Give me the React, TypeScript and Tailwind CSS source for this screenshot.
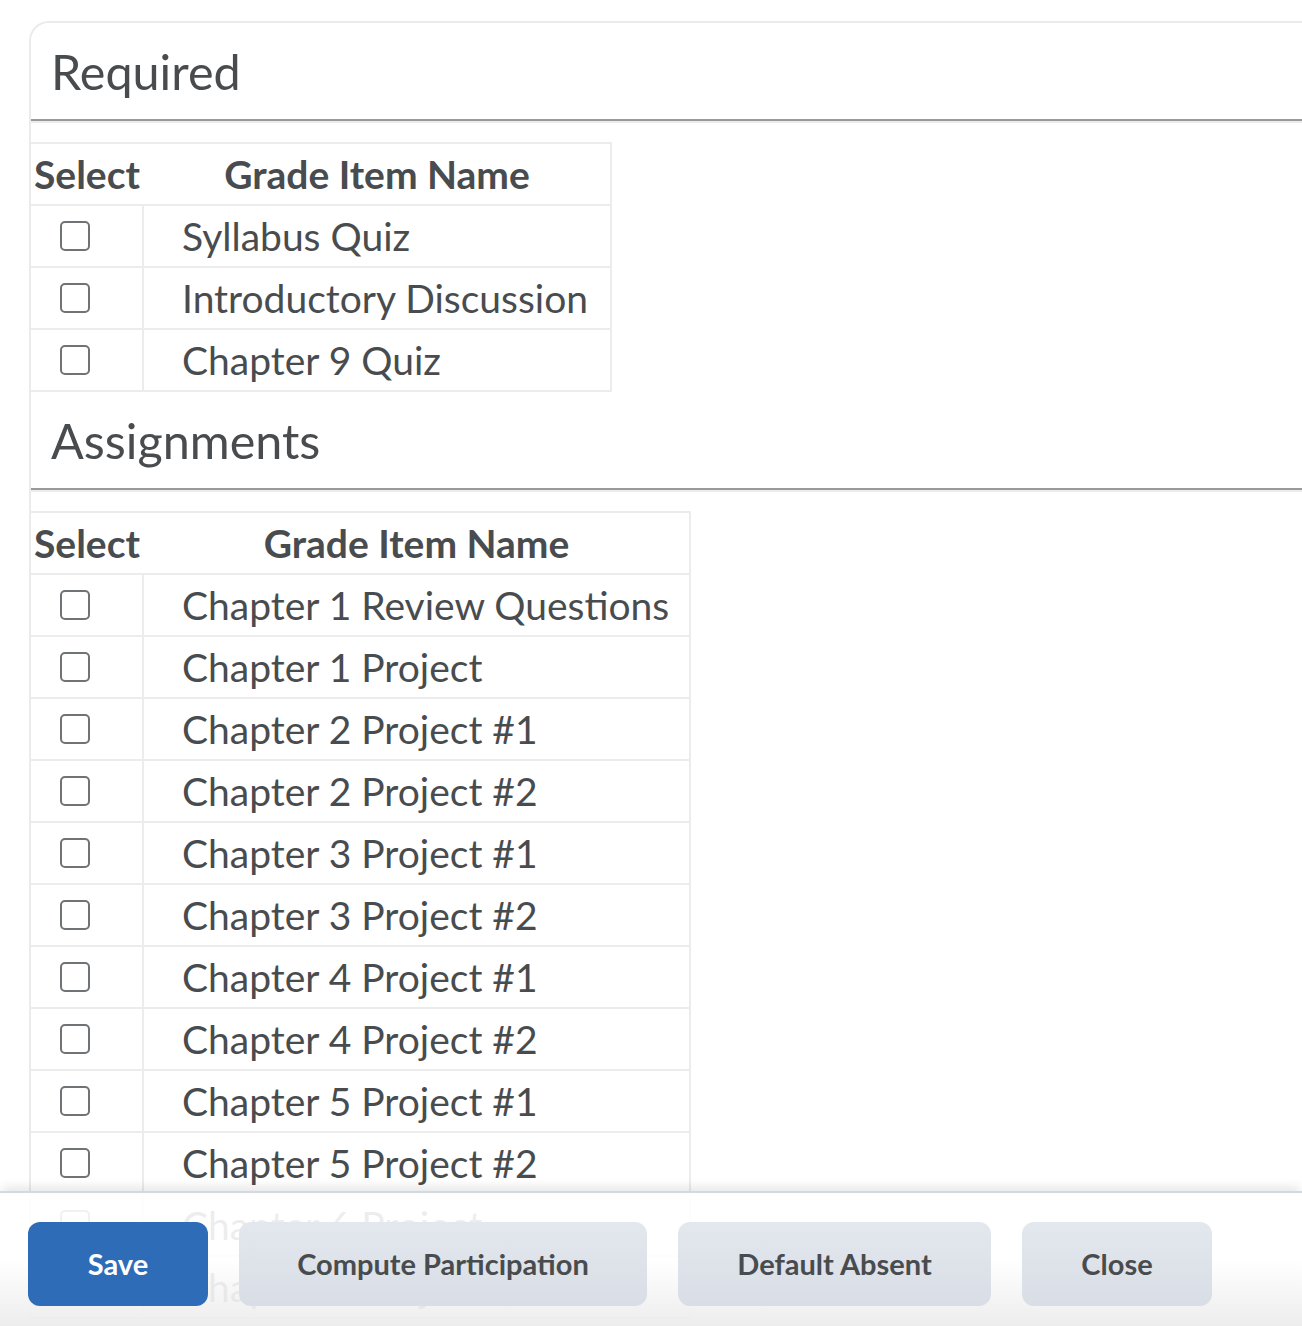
const required = ['Syllabus Quiz', 'Introductory Discussion', 'Chapter 9 Quiz']

const assignments = [
  'Chapter 1 Review Questions',
  'Chapter 1 Project',
  'Chapter 2 Project #1',
  'Chapter 2 Project #2',
  'Chapter 3 Project #1',
  'Chapter 3 Project #2',
  'Chapter 4 Project #1',
  'Chapter 4 Project #2',
  'Chapter 5 Project #1',
  'Chapter 5 Project #2',
  'Chapter 6 Project',
  'Chapter 7 Project',
]

const Checkbox = () => (
  <span className="block h-[30px] w-[30px] rounded-[5px] border-2 border-[#6f7376] bg-white" />
)

const SectionHeader = ({ title }: { title: string }) => (
  <>
    <div className="flex h-[98px] items-center border-b-2 border-[#999999] pl-[20px] text-[48.5px] leading-none text-[#494c4e]">
      {title}
    </div>
    <div className="h-[2px] bg-[#ececec]" />
  </>
)

const GradeTable = ({ items, width }: { items: string[]; width: string }) => (
  <div className={`mt-[19px] border-t-2 border-r-2 border-[#ececec] ${width}`}>
    <div className="flex h-[62px] items-center border-b-2 border-[#ececec] text-[39px] font-bold">
      <div className="w-[111px] shrink-0 pl-[3px]">Select</div>
      <div className="flex-1 pl-[2px] text-center">Grade Item Name</div>
    </div>
    {items.map((name) => (
      <div key={name} className="flex h-[62px] border-b-2 border-[#ececec] text-[39px]">
        <div className="flex w-[111px] shrink-0 items-center pl-[29px]">
          <Checkbox />
        </div>
        <div className="flex flex-1 items-center whitespace-nowrap border-l-2 border-[#ececec] pl-[38px]">
          {name}
        </div>
      </div>
    ))}
  </div>
)

export default function App() {
  return (
    <div
      className="relative h-[1326px] w-[1302px] overflow-hidden bg-white text-[#494c4e]"
      style={{ fontFamily: 'Lato, "Liberation Sans", sans-serif' }}
    >
      <div className="ml-[29px] mt-[21px] rounded-tl-[20px] border-l-2 border-t-2 border-[#ebebeb]">
        <SectionHeader title="Required" />
        <GradeTable items={required} width="w-[581px]" />
        <SectionHeader title="Assignments" />
        <GradeTable items={assignments} width="w-[660px]" />
      </div>

      {/* sticky dialog footer over the list */}
      <div className="absolute bottom-0 left-0 right-0 h-[135px] border-t-2 border-[#d3d9e1] bg-gradient-to-b from-white/90 via-white/90 to-[#ececec]/95 shadow-[0_-6px_10px_-2px_rgba(0,0,0,0.10)]">
        <div className="flex gap-[31px] pl-[28px] pt-[29px]">
          <button
            type="button"
            className="h-[84px] w-[180px] rounded-[12px] bg-[#2e6cb8] text-[29px] font-bold text-white"
          >
            Save
          </button>
          <button
            type="button"
            className="h-[84px] w-[408px] rounded-[12px] bg-gradient-to-b from-[#e3e7ee] to-[#d9dee6] text-[29px] font-bold text-[#494c4e]"
          >
            Compute Participation
          </button>
          <button
            type="button"
            className="h-[84px] w-[313px] rounded-[12px] bg-gradient-to-b from-[#e3e7ee] to-[#d9dee6] text-[29px] font-bold text-[#494c4e]"
          >
            Default Absent
          </button>
          <button
            type="button"
            className="h-[84px] w-[190px] rounded-[12px] bg-gradient-to-b from-[#e3e7ee] to-[#d9dee6] text-[29px] font-bold text-[#494c4e]"
          >
            Close
          </button>
        </div>
      </div>
    </div>
  )
}
